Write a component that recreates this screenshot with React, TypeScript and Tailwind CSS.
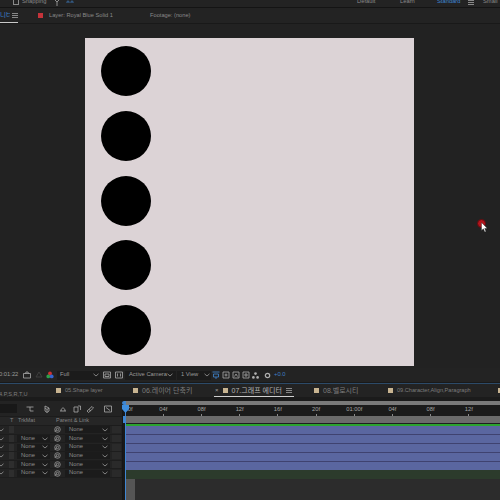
import React from "react";

const font = { fontFamily: '"Liberation Sans", "Noto Sans CJK KR", sans-serif' };

function Chevron({ className = "" }: { className?: string }) {
  return (
    <svg width="6" height="4" viewBox="0 0 6 4" className={className} fill="none" stroke="#9a9a9a" strokeWidth="0.8">
      <path d="M0.5 0.8 L3 3 L5.5 0.8" />
    </svg>
  );
}

function Swatch() {
  return <div className="w-[5px] h-[5px] shrink-0 bg-[#c8b491]" />;
}

function Menu() {
  return (
    <svg width="6" height="5" viewBox="0 0 6 5" stroke="#b5b5b5" strokeWidth="0.7" className="shrink-0">
      <path d="M0 0.5H6M0 2.5H6M0 4.5H6" />
    </svg>
  );
}

function Spiral() {
  return (
    <svg width="7" height="7" viewBox="0 0 8 8" fill="none" stroke="#a8a8a8" strokeWidth="0.8">
      <circle cx="4" cy="4" r="3.2" />
      <circle cx="4" cy="4" r="1.4" />
      <path d="M1 6.5 L3 4" />
    </svg>
  );
}

function ToolIcon({ d, color = "#a9a9a9" }: { d: string; color?: string }) {
  return (
    <svg width="8" height="8" viewBox="0 0 8 8" fill="none" stroke={color} strokeWidth="0.8" className="shrink-0">
      <path d={d} />
    </svg>
  );
}

function Dropdown({ w, label }: { w: string; label: string }) {
  return (
    <div className={`${w} h-[7px] bg-[#1b1b1b] flex items-center justify-between pl-[4px] pr-[2px] text-[#8f8f8f] text-[5.8px] leading-none shrink-0`}>
      <span>{label}</span>
      <Chevron />
    </div>
  );
}

function LayerRow({ track = true }: { track?: boolean }) {
  return (
    <div className="h-[8.7px] flex items-center border-b border-[#1d1d1d]">
      <div className="w-[9px] -ml-[2px] flex justify-start shrink-0">
        <Chevron />
      </div>
      <div className="w-[5px] h-[7px] bg-[#2e2e2e] ml-[2px] shrink-0" />
      <div className="w-[3px] shrink-0" />
      {track ? <Dropdown w="w-[33px]" label="None" /> : <div className="w-[33px] shrink-0" />}
      <div className="w-[15px] flex justify-center shrink-0">
        <Spiral />
      </div>
      <Dropdown w="w-[45px]" label="None" />
      <div className="ml-[2px] w-[9px] h-[7px] bg-[#2a2a2a] shrink-0" />
    </div>
  );
}

function Tab({ w, label, size }: { w: string; label: string; size: string }) {
  return (
    <div className={`${w} flex items-center gap-[4px] shrink-0`}>
      <Swatch />
      <span className={`${size} leading-none text-[#7d7d7d] whitespace-nowrap`}>{label}</span>
    </div>
  );
}

const ticks = ["00f", "04f", "08f", "12f", "16f", "20f", "01:00f", "04f", "08f", "12f"];

export default function App() {
  return (
    <div style={font} className="relative w-[500px] h-[500px] overflow-hidden bg-[#222222] flex flex-col">
      {/* top workspace bar */}
      <div className="h-[8px] shrink-0 bg-[#232323] border-b border-[#141414] overflow-hidden flex items-start text-[5.8px] leading-none text-[#8a8a8a]">
        <div className="-mt-[2px] flex items-center w-full">
          <div className="ml-[13px] w-[6px] h-[6px] border border-[#8a8a8a] shrink-0" />
          <span className="ml-[3px] w-[31px]">Snapping</span>
          <ToolIcon d="M1 1L4 4L7 1M4 4V8" />
          <div className="w-[5px]" />
          <ToolIcon d="M1 5C1 2 3 2 3 5M5 5C5 2 7 2 7 5" color="#3f7fc4" />
          <span className="ml-[283px] w-[43px]">Default</span>
          <span className="w-[37px]">Learn</span>
          <span className="w-[31px] text-[#3f86d2]">Standard</span>
          <div className="w-[15px]"><Menu /></div>
          <span>Small</span>
        </div>
      </div>

      {/* panel tabs */}
      <div className="h-[16px] shrink-0 bg-[#232323] border-b border-[#191919] flex items-center text-[5.7px] leading-none text-[#8a8a8a]">
        <div className="w-[19px] h-full flex items-center gap-[2px] border-b border-[#c9c9c9] shrink-0 -ml-[1px]">
          <span className="text-[#3f86d2] text-[6.5px] w-[11px] pl-[1px] whitespace-nowrap overflow-hidden">디터</span>
          <Menu />
        </div>
        <div className="ml-[20px] w-[5px] h-[5px] bg-[#c4333a] shrink-0" />
        <span className="ml-[6px] w-[101px] whitespace-nowrap">Layer: Royal Blue Solid 1</span>
        <span className="whitespace-nowrap">Footage: (none)</span>
      </div>

      {/* viewer */}
      <div className="h-[344px] shrink-0 bg-[#222222] pl-[85px] pt-[14px]">
        <div className="w-[329px] h-[328px] bg-[#dcd3d6] pl-[15.5px] pt-[8px] flex flex-col gap-[14.8px]">
          <div className="w-[50px] h-[50px] rounded-full bg-black" />
          <div className="w-[50px] h-[50px] rounded-full bg-black" />
          <div className="w-[50px] h-[50px] rounded-full bg-black" />
          <div className="w-[50px] h-[50px] rounded-full bg-black" />
          <div className="w-[50px] h-[50px] rounded-full bg-black" />
        </div>
      </div>

      {/* viewer toolbar */}
      <div className="h-[14px] shrink-0 bg-[#232323] flex items-center text-[5.8px] leading-none text-[#9a9a9a]">
        <span className="w-[24px] -ml-[1px] whitespace-nowrap shrink-0">0:01:22</span>
        <ToolIcon d="M0.5 2.5H7.5V7H0.5ZM2.5 2.5L3 1H5L5.5 2.5" />
        <div className="w-[4px]" />
        <ToolIcon d="M1 6L4 1L7 6Z" color="#444444" />
        <div className="w-[3px]" />
        <svg width="8" height="8" viewBox="0 0 8 8" className="shrink-0">
          <circle cx="4" cy="2.4" r="1.9" fill="#d03030" />
          <circle cx="2.3" cy="5.4" r="1.9" fill="#2ea04a" />
          <circle cx="5.7" cy="5.4" r="1.9" fill="#3565cf" />
        </svg>
        <div className="w-[3px]" />
        <div className="w-[43px] h-[9px] bg-[#1b1b1b] flex items-center justify-between pl-[3px] pr-[1px] shrink-0">
          <span>Full</span>
          <Chevron />
        </div>
        <div className="w-[3px]" />
        <ToolIcon d="M0.5 1H7.5V7H0.5ZM2 3H6V5.5H2Z" />
        <div className="w-[4px]" />
        <ToolIcon d="M0.5 1H7.5V7H0.5ZM2.5 2.5V5.5M5.5 2.5V5.5" />
        <div className="w-[2px]" />
        <div className="w-[51px] h-[9px] bg-[#1b1b1b] flex items-center justify-between pl-[4px] pr-[3px] shrink-0">
          <span className="whitespace-nowrap">Active Camera</span>
          <Chevron />
        </div>
        <div className="w-[1px]" />
        <div className="w-[34px] h-[9px] bg-[#1b1b1b] flex items-center justify-between pl-[4px] pr-[1px] shrink-0">
          <span className="whitespace-nowrap">1 View</span>
          <Chevron />
        </div>
        <div className="w-[1px]" />
        <ToolIcon d="M0.5 1H7.5M1.5 3H6.5V6H1.5ZM4 6V8" color="#3f86d2" />
        <div className="w-[2px]" />
        <ToolIcon d="M1 1H7V7H1ZM4 2.5V5.5M2.5 4H5.5" />
        <div className="w-[2px]" />
        <ToolIcon d="M1 1H7V7H1ZM2.5 5.5L4 3L5.5 5.5" />
        <div className="w-[2px]" />
        <ToolIcon d="M1 1H7V7H1ZM3 3H5V5H3Z" />
        <div className="w-[2px]" />
        <svg width="7" height="7" viewBox="0 0 8 8" fill="#b0b0b0" className="shrink-0">
          <circle cx="4" cy="1.8" r="1.5" />
          <circle cx="1.6" cy="6.2" r="1.5" />
          <circle cx="6.4" cy="6.2" r="1.5" />
        </svg>
        <div className="w-[5px]" />
        <svg width="7" height="7" viewBox="0 0 8 8" fill="none" stroke="#b0b0b0" strokeWidth="1.4" className="shrink-0">
          <circle cx="4" cy="4" r="2.5" />
        </svg>
        <span className="ml-[3px] text-[#3f7fc4]">+0.0</span>
      </div>

      {/* composition tabs */}
      <div className="h-[1px] shrink-0 bg-[#191919]" />
      <div className="h-[14px] shrink-0 bg-[#232323] border-t border-[#2c4a68] flex items-center">
        <div className="w-[57px] shrink-0 overflow-hidden -ml-[1px]">
          <span className="text-[5.6px] leading-none text-[#7d7d7d] whitespace-nowrap">4.P,S,R,T,U</span>
        </div>
        <Tab w="w-[77px]" label="05.Shape layer" size="text-[5.6px]" />
        <Tab w="w-[81px]" label="06.레이어 단축키" size="text-[7px]" />
        <div className="w-[80px] h-full flex items-center gap-[4px] border-b border-[#cfcfcf] shrink-0 pl-[1px]">
          <span className="text-[6px] leading-none text-[#a0a0a0]">×</span>
          <Swatch />
          <span className="text-[7px] leading-none text-[#b5b5b5] whitespace-nowrap">07.그래프 에디터</span>
          <Menu />
        </div>
        <div className="w-[20px] shrink-0" />
        <Tab w="w-[74px]" label="08.벨로시티" size="text-[7px]" />
        <Tab w="w-[110px]" label="09.Character,Align,Paragraph" size="text-[5.6px]" />
        <Swatch />
      </div>
      <div className="h-[4px] shrink-0 bg-[#1b1b1b]" />

      {/* timeline */}
      <div className="flex-1 min-h-0 flex bg-[#232323]">
        {/* layer panel */}
        <div className="w-[123px] shrink-0 flex flex-col bg-[#232323] border-r border-[#161616]">
          <div className="h-[15px] shrink-0 flex items-center">
            <div className="w-[17px] h-[9px] bg-[#181818] shrink-0" />
            <div className="w-[9px]" />
            <ToolIcon d="M0.5 2H7.5M4 2V6H7.5" />
            <div className="w-[9px]" />
            <ToolIcon d="M2 1L6 3V6L4 7.5L2 6ZM2 3L4 4.5L6 3M4 4.5V7.5" />
            <div className="w-[8px]" />
            <ToolIcon d="M1 6H7M2 6C2 2 6 2 6 6" />
            <div className="w-[6px]" />
            <ToolIcon d="M1 2H5V7H1ZM5 1H7.5V5" />
            <div className="w-[5px]" />
            <ToolIcon d="M1 6L6 1.5L7.5 3L2.5 7.5ZM3 4.5L5 6" />
            <div className="w-[10px]" />
            <ToolIcon d="M0.5 1H7.5V7H0.5ZM2 2.5L6 5.5" />
          </div>
          <div className="h-[10px] shrink-0 flex items-center bg-[#262626] border-y border-[#1c1c1c] text-[5.5px] leading-none text-[#848484]">
            <span className="ml-[10px] w-[8px]">T</span>
            <span className="w-[38px]">TrkMat</span>
            <span className="whitespace-nowrap">Parent &amp; Link</span>
          </div>
          <LayerRow track={false} />
          <LayerRow />
          <LayerRow />
          <LayerRow />
          <LayerRow />
          <LayerRow />
        </div>

        {/* tracks */}
        <div className="w-[2px] shrink-0 bg-[#191919]" />
        <div className="flex-1 min-w-0 flex flex-col">
          <div className="h-[4px] shrink-0 bg-[#7a7a7a]" />
          <div className="h-[11px] shrink-0 bg-[#1b1b1b] overflow-hidden">
            <div className="h-full flex -ml-[19px]">
              {ticks.map((t, i) => (
                <div key={i} className="w-[38.2px] shrink-0 flex flex-col items-center justify-end">
                  <span className={`text-[5.8px] leading-none text-[#a5a5a5] whitespace-nowrap ${i === 0 ? "pl-[7px]" : ""}`}>{t}</span>
                  <div className="w-[1px] h-[2px] mt-[1px] bg-[#8a8a8a]" />
                </div>
              ))}
            </div>
          </div>
          <div className="h-[7px] shrink-0 bg-[#6b6b6b]" />
          <div className="h-[1px] shrink-0 bg-[#1e1e1e]" />
          <div className="h-[2px] shrink-0 bg-[#2ba32f]" />
          <div className="h-[8px] shrink-0 bg-[#5a66a0]" />
          <div className="h-[1px] shrink-0 bg-[#3f4270]" />
          <div className="h-[8px] shrink-0 bg-[#5a66a0]" />
          <div className="h-[1px] shrink-0 bg-[#3f4270]" />
          <div className="h-[8px] shrink-0 bg-[#5a66a0]" />
          <div className="h-[1px] shrink-0 bg-[#3f4270]" />
          <div className="h-[8px] shrink-0 bg-[#5a66a0]" />
          <div className="h-[1px] shrink-0 bg-[#3f4270]" />
          <div className="h-[8px] shrink-0 bg-[#5a66a0]" />
          <div className="h-[9px] shrink-0 bg-[#2c3b2c]" />
          <div className="flex-1 min-h-0 flex bg-[#2c2c2c]">
            <div className="w-[10px] bg-[#555555]" />
          </div>
        </div>
      </div>

      {/* playhead */}
      <div className="absolute left-[125px] top-[412px] w-[1px] h-[88px] bg-[#3f86d2]" />
      <div className="absolute left-[122px] top-[401px] w-[4px] h-[4px] rounded-l-full bg-[#3f86d2]" />
      <svg className="absolute left-[122px] top-[405px]" width="7" height="8" viewBox="0 0 7 8">
        <path d="M0 0H7V4L3.5 8L0 4Z" fill="#3f8fe0" />
      </svg>
      <div className="absolute left-[123px] top-[416px] w-[3px] h-[7px] bg-[#3f86d2]" />

      {/* cursor */}
      <div className="absolute left-[477px] top-[219px] w-[9px] h-[9px] rounded-full bg-[#b3141c] border border-[#5c0d10]" />
      <svg className="absolute left-[481px] top-[222px]" width="7" height="11" viewBox="0 0 7 11">
        <path d="M0.5 0.5V8.5L2.4 6.8L3.8 10L5 9.5L3.7 6.4L6.2 6.2Z" fill="#ffffff" stroke="#222222" strokeWidth="0.4" />
      </svg>
    </div>
  );
}
